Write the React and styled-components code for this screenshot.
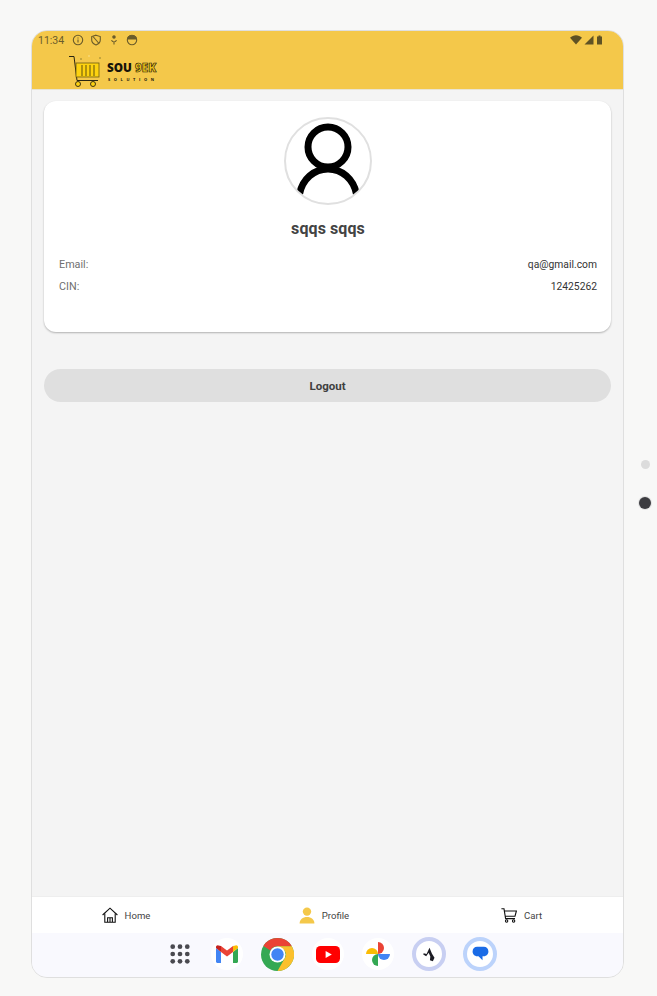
import styled, { createGlobalStyle } from 'styled-components';

const Global = createGlobalStyle`
  html, body {
    margin: 0;
    padding: 0;
    background: #f8f8f7;
    font-family: Roboto, "Liberation Sans", sans-serif;
  }
`;

const Device = styled.div`
  width: 657px;
  height: 996px;
  box-sizing: border-box;
  padding: 30px 0 18px 31px;
  display: flex;
  overflow: hidden;
`;

const Screen = styled.div`
  width: 593px;
  box-sizing: border-box;
  border: 1px solid #dfdfdf;
  border-radius: 16px;
  overflow: hidden;
  display: flex;
  flex-direction: column;
  background: #f4f4f4;
`;

const Rail = styled.div`
  flex: 1;
  display: flex;
  flex-direction: column;
  align-items: center;
  padding: 430px 0 0 9px;
  gap: 28px;
`;

const Dot = styled.div`
  width: ${(p) => (p.$camera ? 12 : 9)}px;
  height: ${(p) => (p.$camera ? 12 : 9)}px;
  border-radius: 50%;
  background: ${(p) => (p.$camera ? '#3c3c40' : '#dcdcdc')};
  box-shadow: ${(p) => (p.$camera ? '0 0 0 1px #e2e2e2' : 'none')};
`;

const Header = styled.header`
  height: 59px;
  flex-shrink: 0;
  background: #f4c84a;
  border-bottom: 1px solid #e9e4d2;
  box-sizing: border-box;
`;

const StatusBar = styled.div`
  height: 18px;
  padding: 0 20px 0 6px;
  display: flex;
  align-items: center;
  color: #6b5c2a;
  font-size: 10.5px;
`;

const Clock = styled.span`
  width: 27px;
  margin-right: 7px;
`;

const StatusIcons = styled.div`
  display: flex;
  align-items: center;
  gap: 6px;
`;

const StatusRight = styled.div`
  margin-left: auto;
  display: flex;
  align-items: center;
  gap: 2px;
`;

const Brand = styled.div`
  display: flex;
  align-items: flex-start;
  padding-left: 37px;
  height: 36px;
  margin-top: 6px;
  gap: 4px;
`;

const BrandText = styled.div`
  display: flex;
  flex-direction: column;
  padding-top: 6px;
`;

const BrandName = styled.div`
  font-family: "Open Sans", sans-serif;
  font-weight: 800;
  font-size: 11.7px;
  line-height: 13px;
  color: #17140a;
  white-space: nowrap;
`;

const BrandAccent = styled.span`
  color: #f0c419;
  -webkit-text-stroke: 0.6px #17140a;
`;

const BrandSub = styled.div`
  font-family: "Open Sans", sans-serif;
  font-weight: 700;
  font-size: 4px;
  line-height: 5px;
  letter-spacing: 3.6px;
  padding-left: 1px;
  margin-top: 3px;
  color: #17140a;
  white-space: nowrap;
`;

const Main = styled.main`
  flex: 1;
  padding: 11px 12px 0;
  display: flex;
  flex-direction: column;
`;

const Card = styled.section`
  height: 231px;
  box-sizing: border-box;
  background: #fff;
  border-radius: 12px;
  box-shadow: 0 1px 2px rgba(0, 0, 0, 0.28);
  padding: 16px 14px 0 15px;
  display: flex;
  flex-direction: column;
`;

const Avatar = styled.div`
  width: 88px;
  height: 88px;
  box-sizing: border-box;
  align-self: center;
  border-radius: 50%;
  border: 2px solid #e0e0e0;
  overflow: hidden;
  flex-shrink: 0;
`;

const Name = styled.h2`
  margin: 14px 0 15px;
  text-align: center;
  font-size: 16px;
  line-height: 19px;
  font-weight: 700;
  color: #434343;
  letter-spacing: 0.1px;
`;

const Row = styled.div`
  display: flex;
  justify-content: space-between;
  align-items: center;
  height: 22px;
  font-size: 10.3px;
`;

const Label = styled.span`
  color: #6f6f6f;
  font-size: 10.8px;
`;

const Value = styled.span`
  color: #333;
`;

const LogoutButton = styled.button`
  margin-top: 37px;
  height: 33px;
  border: none;
  padding: 1px 0 0;
  border-radius: 17px;
  background: #dfdfdf;
  color: #404040;
  font-family: inherit;
  font-size: 11.5px;
  font-weight: 700;
`;

const BottomNav = styled.nav`
  height: 37px;
  flex-shrink: 0;
  background: #fff;
  border-top: 1px solid #eeeeee;
  box-sizing: border-box;
  display: grid;
  grid-template-columns: 198px 198px 195px;
`;

const NavItem = styled.div`
  display: flex;
  align-items: center;
  justify-content: center;
  gap: 7px;
  padding-right: 10px;
  font-size: 9.6px;
  color: #444;

  &:last-child {
    padding-right: 8px;
  }
`;

const Dock = styled.div`
  height: 44px;
  flex-shrink: 0;
  box-sizing: border-box;
  background: #f9f9fe;
  display: flex;
  align-items: center;
  padding: 0 0 2px 136px;
`;

const AppIcon = styled.div`
  width: ${(p) => p.$size || 32}px;
  height: ${(p) => p.$size || 32}px;
  flex-shrink: 0;
  margin-right: ${(p) => p.$gap ?? 18}px;
  border-radius: 50%;
  background: ${(p) => p.$bg || '#fff'};
  display: flex;
  align-items: center;
  justify-content: center;
  box-sizing: border-box;
  border: ${(p) => (p.$ring ? `4px solid ${p.$ring}` : 'none')};
`;

const Cart = () => (
  <svg width="34" height="34" viewBox="0 0 34 34" fill="none">
    <circle cx="12" cy="4" r="0.8" fill="#8a7a2c" />
    <circle cx="31" cy="3" r="0.8" fill="#8a7a2c" />
    <circle cx="20" cy="1" r="0.7" fill="#fbe9a6" />
    <path d="M0 1.5H5L8 25.5H29" stroke="#2a2510" strokeWidth="1" />
    <rect x="7" y="8" width="23" height="14" fill="#fdd20f" stroke="#6c5a10" strokeWidth="0.8" />
    <path d="M13 10V21M17 10V21M21 10V21M25 10V21" stroke="#6c5a10" strokeWidth="1.1" />
    <circle cx="9" cy="29" r="2.5" fill="#fdd20f" stroke="#2a2510" strokeWidth="0.9" />
    <circle cx="24" cy="29" r="2.5" fill="#fdd20f" stroke="#2a2510" strokeWidth="0.9" />
  </svg>
);

const StatusGlyph = ({ children }) => (
  <svg width="12" height="12" viewBox="0 0 12 12" fill="none" stroke="#6b5c2a" strokeWidth="1.1">
    {children}
  </svg>
);

export default function App() {
  return (
    <Device>
      <Global />
      <Screen>
        <Header>
          <StatusBar>
            <Clock>11:34</Clock>
            <StatusIcons>
              <StatusGlyph>
                <circle cx="6" cy="6" r="4.7" />
                <path d="M6 5.4V8.6M6 3.4V4.4" />
              </StatusGlyph>
              <StatusGlyph>
                <path d="M6 1.2L10.3 2.6V6C10.3 8.4 8.4 10 6 10.9C3.6 10 1.7 8.4 1.7 6V2.6Z" />
                <path d="M3 2.5L9 9.5" />
              </StatusGlyph>
              <StatusGlyph>
                <circle cx="6" cy="3" r="1.2" fill="#6b5c2a" />
                <path d="M3.6 6C4 8.6 8 8.6 8.4 6M6 8V10.6" />
              </StatusGlyph>
              <StatusGlyph>
                <circle cx="6" cy="6" r="4.7" />
                <path d="M2 5H10V3.2L8 1.8H4L2 3.2Z" fill="#6b5c2a" />
              </StatusGlyph>
            </StatusIcons>
            <StatusRight>
              <svg width="12" height="10" viewBox="0 0 12 10" fill="#5f5224">
                <path d="M0 2.8C3.4 -0.6 8.6 -0.6 12 2.8L6 9.4Z" />
              </svg>
              <svg width="10" height="10" viewBox="0 0 10 10" fill="#5f5224">
                <path d="M9.5 0.5V9.5H0.5Z" />
              </svg>
              <svg width="7" height="10" viewBox="0 0 7 10" fill="#5f5224">
                <path d="M1 1.6H2.5V0.5H4.5V1.6H6V9.5H1Z" />
              </svg>
            </StatusRight>
          </StatusBar>
          <Brand>
            <Cart />
            <BrandText>
              <BrandName>
                SOU <BrandAccent>9EK</BrandAccent>
              </BrandName>
              <BrandSub>SOLUTION</BrandSub>
            </BrandText>
          </Brand>
        </Header>

        <Main>
          <Card>
            <Avatar>
              <svg width="84" height="84" viewBox="0 0 84 84" fill="none" stroke="#000" strokeWidth="7">
                <circle cx="42" cy="28" r="20" />
                <path d="M13.5 75C16.5 60 28 50 42 50C56 50 67.5 60 70.5 75" />
              </svg>
            </Avatar>
            <Name>sqqs sqqs</Name>
            <Row>
              <Label>Email:</Label>
              <Value>qa@gmail.com</Value>
            </Row>
            <Row>
              <Label>CIN:</Label>
              <Value>12425262</Value>
            </Row>
          </Card>
          <LogoutButton>Logout</LogoutButton>
        </Main>

        <BottomNav>
          <NavItem>
            <svg width="16" height="16" viewBox="0 0 16 16" fill="none" stroke="#111" strokeWidth="1.1">
              <path d="M0.6 8L8 1.2L15.4 8" />
              <path d="M2.8 6.6V15.2H13.2V6.6M5.6 15.2V10.8H10.4V15.2M8 10.8V15.2" />
            </svg>
            Home
          </NavItem>
          <NavItem>
            <svg width="16" height="17" viewBox="0 0 16 17" fill="#f4c84a">
              <circle cx="8" cy="4.6" r="4.2" />
              <path d="M0.6 16.6C0.6 12.4 3.8 10 8 10C12.2 10 15.4 12.4 15.4 16.6Z" />
            </svg>
            Profile
          </NavItem>
          <NavItem>
            <svg width="16" height="15" viewBox="0 0 16 15" fill="none" stroke="#111" strokeWidth="1.1">
              <path d="M0.4 0.8H3L4.6 10.6H14M3.4 3H15.4L14 8.2H4.2" />
              <circle cx="5.6" cy="13" r="1.2" />
              <circle cx="12.6" cy="13" r="1.2" />
            </svg>
            Cart
          </NavItem>
        </BottomNav>

        <Dock>
          <AppIcon $size={24} $bg="transparent" $gap={19}>
            <svg width="20" height="20" viewBox="0 0 22 22" fill="#4a4a50">
              {[3, 11, 19].flatMap((y) =>
                [3, 11, 19].map((x) => <circle key={`${x}-${y}`} cx={x} cy={y} r="2.6" />)
              )}
            </svg>
          </AppIcon>
          <AppIcon>
            <svg width="22" height="18" viewBox="0 0 22 18">
              <path d="M0 3L5 7V18H1.5C0.7 18 0 17.3 0 16.5Z" fill="#4285f4" />
              <path d="M22 3L17 7V18H20.5C21.3 18 22 17.3 22 16.5Z" fill="#34a853" />
              <path d="M5 7L11 11.5L17 7V1L11 5.5L5 1Z" fill="#ea4335" />
              <path d="M17 1L19.6 0.4C20.8 0 22 0.8 22 2.2V3L17 7Z" fill="#fbbc04" />
              <path d="M5 1L2.4 0.4C1.2 0 0 0.8 0 2.2V3L5 7Z" fill="#c5221f" />
            </svg>
          </AppIcon>
          <AppIcon $size={33} $bg="transparent">
            <svg width="33" height="33" viewBox="0 0 33 33">
              <circle cx="16.5" cy="16.5" r="16.5" fill="#34a853" />
              <path d="M16.5 0A16.5 16.5 0 0 1 30.8 8.25H16.5A8.25 8.25 0 0 0 9.4 12.4L2.4 8A16.5 16.5 0 0 1 16.5 0Z" fill="#ea4335" />
              <path d="M30.8 8.25A16.5 16.5 0 0 1 16.5 33L23.6 20.6A8.25 8.25 0 0 0 23.6 12.4L16.5 8.25Z" fill="#fbc02d" />
              <circle cx="16.5" cy="16.5" r="8" fill="#fff" />
              <circle cx="16.5" cy="16.5" r="6.2" fill="#4285f4" />
            </svg>
          </AppIcon>
          <AppIcon>
            <svg width="24" height="17" viewBox="0 0 24 17">
              <rect width="24" height="17" rx="4.5" fill="#f00" />
              <path d="M9.6 5V12L15.8 8.5Z" fill="#fff" />
            </svg>
          </AppIcon>
          <AppIcon>
            <svg width="26" height="26" viewBox="0 0 26 26">
              <path d="M1 13A6 6 0 0 1 13 13Z" fill="#fbbc04" />
              <path d="M13 1A6 6 0 0 1 13 13Z" fill="#ea4335" />
              <path d="M25 13A6 6 0 0 1 13 13Z" fill="#4285f4" />
              <path d="M13 25A6 6 0 0 1 13 13Z" fill="#34a853" />
            </svg>
          </AppIcon>
          <AppIcon $size={34} $ring="#c8cff2" $gap={17}>
            <svg width="15" height="15" viewBox="0 0 18 18" fill="#1c1c24">
              <path d="M9 1L5.5 8.5L2 7.5L1.5 9L5 11L8 7L10 11.5L9.5 16L13 17L15 13L12 8Z" />
            </svg>
          </AppIcon>
          <AppIcon $size={34} $ring="#bcd3fb">
            <svg width="17" height="16" viewBox="0 0 20 19" fill="#1a6be6">
              <path d="M6 1H14C17 1 19.4 3.4 19.4 6.6C19.4 9.8 17 12.2 14 12.2H12.4V17L7.6 12.2H6C3 12.2 0.6 9.8 0.6 6.6C0.6 3.4 3 1 6 1Z" />
            </svg>
          </AppIcon>
        </Dock>
      </Screen>
      <Rail>
        <Dot />
        <Dot $camera />
      </Rail>
    </Device>
  );
}
